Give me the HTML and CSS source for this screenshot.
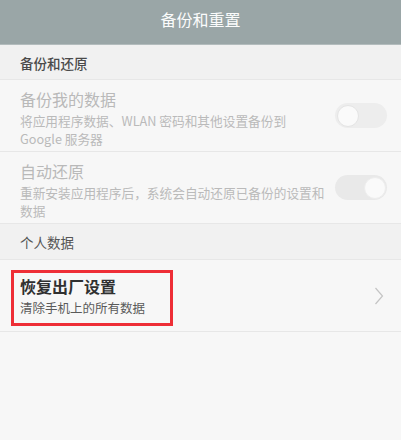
FILE: index.html
```html
<!DOCTYPE html>
<html lang="zh-CN">
<head>
<meta charset="utf-8">
<link rel="stylesheet" href="styles.css">
</head>
<body>
<div class="app">
  <header class="topbar">备份和重置</header>

  <div class="section">备份和还原</div>

  <div class="row disabled">
    <div class="text">
      <div class="title">备份我的数据</div>
      <div class="sub">将应用程序数据、WLAN 密码和其他设置备份到<br>Google 服务器</div>
    </div>
    <div class="toggle off"><span class="knob"></span></div>
  </div>

  <div class="row disabled">
    <div class="text">
      <div class="title">自动还原</div>
      <div class="sub">重新安装应用程序后，系统会自动还原已备份的设置和<br>数据</div>
    </div>
    <div class="toggle on"><span class="knob"></span></div>
  </div>

  <div class="section section-b">个人数据</div>

  <div class="row reset">
    <div class="text">
      <div class="title">恢复出厂设置</div>
      <div class="sub">清除手机上的所有数据</div>
    </div>
    <svg class="chev" width="10" height="18" viewBox="0 0 10 18">
      <path d="M1.5 1 L8.5 9 L1.5 17" fill="none" stroke="#c4c4c4" stroke-width="1.2"/>
    </svg>
    <div class="mark"></div>
  </div>
</div>
</body>
</html>
```

FILE: styles.css
```css
* { box-sizing: border-box; }
html, body { margin: 0; padding: 0; }
body {
  background: #f7f7f7;
  font-family: "Noto Sans CJK SC", "Noto Sans", sans-serif;
  width: 401px;
  height: 440px;
  overflow: hidden;
}
.app { display: flex; flex-direction: column; }
.topbar {
  height: 45px;
  background: #9aa6a7;
  color: #fbfcfc;
  font-size: 16px;
  line-height: 38px;
  text-align: center;
  border-bottom: 1px solid #b3bcbd;
}
.section {
  height: 35px;
  background: #f1f1f1;
  color: #4a4a4a;
  font-size: 13.5px;
  font-weight: 500;
  line-height: 36px;
  padding-left: 20px;
  border-bottom: 1px solid #e7e7e7;
}
.section-b { height: 36px; line-height: 37px; color: #555; font-weight: normal; }
.row {
  position: relative;
  height: 72px;
  display: flex;
  align-items: center;
  justify-content: space-between;
  padding: 0 14px 0 20px;
  background: #f7f7f7;
  border-bottom: 1px solid #e7e7e7;
}
.row.disabled { align-items: flex-start; }
.row.disabled .text { padding-top: 9px; }
.title { font-size: 16px; line-height: 20px; }
.sub { font-size: 12.7px; line-height: 18px; margin-top: 3px; }
.disabled .title { color: #b9b9b9; }
.disabled .sub { color: #bababa; }
.toggle {
  align-self: center;
  width: 52px;
  height: 25px;
  border-radius: 13px;
  background: #ededed;
  padding: 1.5px;
  display: flex;
}
.toggle.on { background: #e9e9e9; justify-content: flex-end; }
.knob {
  width: 22px;
  height: 22px;
  border-radius: 50%;
  background: #fafafa;
  border: 1px solid #e4e4e4;
}
.toggle.on .knob { border-color: #ededed; }
.reset .text { padding-top: 0; }
.reset .title {
  font-size: 16px;
  line-height: 22px;
  font-weight: bold;
  color: #303030;
}
.reset .sub { color: #5a5a5a; margin-top: 2px; font-size: 12.5px; }
.chev { margin-right: 3px; }
.mark {
  position: absolute;
  left: 11px;
  top: 10px;
  width: 162px;
  height: 56px;
  border: 3px solid #ee2e36;
}
```
